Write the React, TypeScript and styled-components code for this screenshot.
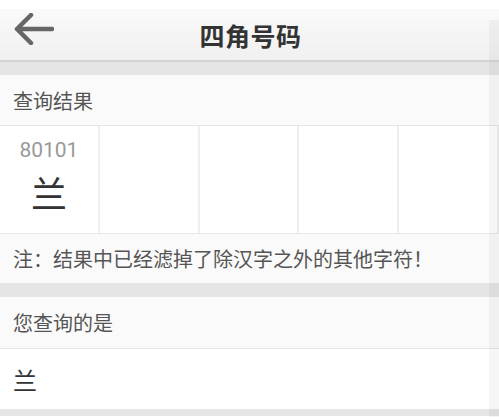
import React from 'react';
import styled, { createGlobalStyle } from 'styled-components';

const GlobalStyle = createGlobalStyle`
    html, body {
        margin: 0;
        padding: 0;
        background: #ffffff;
    }
    body {
        font-family: "Noto Sans CJK SC", "Noto Sans", sans-serif;
        width: 499px;
        height: 417px;
        overflow: hidden;
    }
`;

const Page = styled.div`
    position: relative;
    display: flex;
    flex-direction: column;
    width: 499px;
    height: 417px;
    padding-top: 9px;
    box-sizing: border-box;
    background: #ffffff;
`;

// faint scroll shadow that sits over the right edge of the content
const ScrollEdge = styled.div`
    position: absolute;
    right: 0;
    top: 20px;
    bottom: 0;
    width: 10px;
    background: rgba(0, 0, 0, 0.035);
    pointer-events: none;
`;

const Header = styled.div`
    position: relative;
    height: 53px;
    display: flex;
    align-items: center;
    justify-content: center;
    background: linear-gradient(to bottom, #fafafa, #f0f0f0);
    border-bottom: 2px solid #d4d4d4;
    box-sizing: border-box;
`;

const BackButton = styled.button`
    position: absolute;
    left: 12px;
    top: 3px;
    width: 44px;
    height: 34px;
    padding: 0;
    border: none;
    background: transparent;
    display: flex;
    align-items: center;
    justify-content: center;
`;

const Title = styled.h1`
    margin: 0 0 0 2px;
    font-size: 25px;
    font-weight: 700;
    color: #333333;
    letter-spacing: 0.5px;
`;

const Band = styled.div<{ $height: number }>`
    height: ${p => p.$height}px;
    background: #e5e5e5;
`;

const SectionRow = styled.div<{ $height: number; $white?: boolean }>`
    height: ${p => p.$height}px;
    display: flex;
    align-items: center;
    padding-left: 13px;
    background: ${p => (p.$white ? '#ffffff' : '#fafafa')};
    border-bottom: 1px solid #e6e6e6;
    box-sizing: border-box;
    font-size: 20px;
    color: #555555;
`;

const Grid = styled.div`
    display: grid;
    grid-template-columns: repeat(5, 1fr);
    height: 108px;
    background: #ffffff;
    border-bottom: 1px solid #e6e6e6;
    box-sizing: border-box;
`;

const Cell = styled.div`
    display: flex;
    flex-direction: column;
    align-items: center;
    border-right: 2px solid #efefef;
    padding-top: 10px;
`;

const Code = styled.div`
    font-family: Roboto, "Noto Sans", sans-serif;
    font-size: 21px;
    color: #999999;
    line-height: 28px;
`;

const Char = styled.div`
    font-size: 36px;
    color: #333333;
    line-height: 52px;
    margin-top: 2px;
`;

const Result = styled.div`
    font-size: 24px;
    color: #333333;
`;

const BackArrow = () => (
    <svg width="40" height="32" viewBox="0 0 40 32" fill="none">
        <path d="M38 16H3M17 2L3 16L17 30" stroke="#666666" strokeWidth="4.5" strokeLinecap="round" strokeLinejoin="round" />
    </svg>
);

const cells = [{ code: '80101', char: '兰' }, null, null, null, null];

const App = () => {
    return (
        <>
            <GlobalStyle />
            <Page>
                <Header>
                    <BackButton aria-label="返回">
                        <BackArrow />
                    </BackButton>
                    <Title>四角号码</Title>
                </Header>
                <Band $height={13} />
                <SectionRow $height={51}>查询结果</SectionRow>
                <Grid>
                    {cells.map((c, i) => (
                        <Cell key={i}>
                            {c && (
                                <>
                                    <Code>{c.code}</Code>
                                    <Char>{c.char}</Char>
                                </>
                            )}
                        </Cell>
                    ))}
                </Grid>
                <SectionRow $height={50}>注：结果中已经滤掉了除汉字之外的其他字符！</SectionRow>
                <Band $height={13} />
                <SectionRow $height={52}>您查询的是</SectionRow>
                <SectionRow $height={61} $white>
                    <Result>兰</Result>
                </SectionRow>
                <Band $height={6} />
                <ScrollEdge />
            </Page>
        </>
    );
};

export default App;
